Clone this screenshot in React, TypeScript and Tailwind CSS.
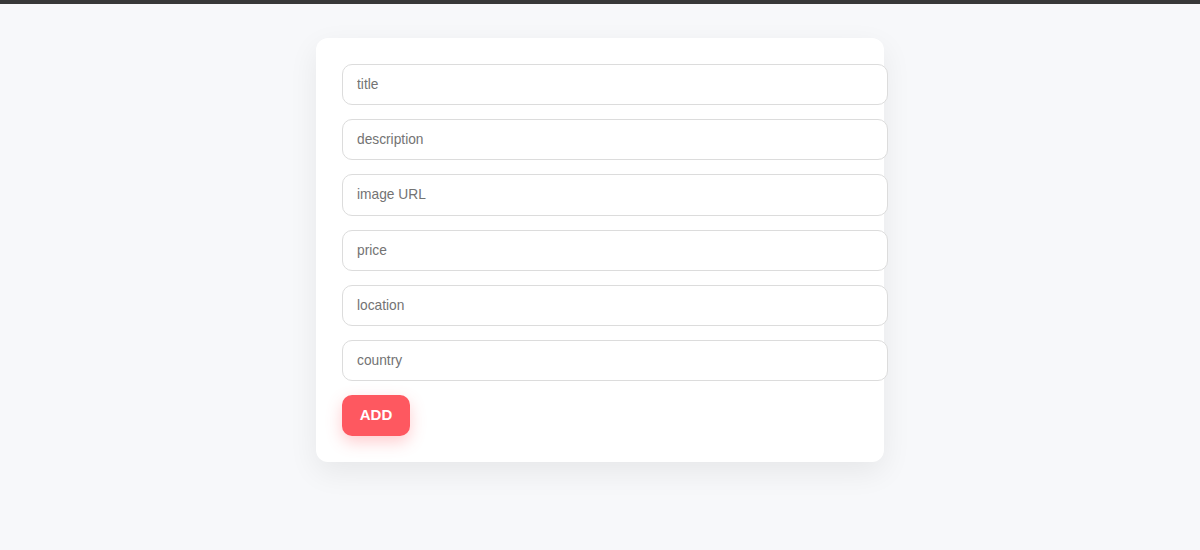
const FIELDS = ['title', 'description', 'image URL', 'price', 'location', 'country']

export default function App() {
  return (
    <div className="min-h-[550px] bg-[#f7f8fa] font-['Liberation_Sans',Arial,sans-serif]">
      <div className="h-1 bg-[#383838]" />
      <div className="flex justify-center pt-[34px]">
        <form className="w-[568px] rounded-xl bg-white p-[26px] shadow-[0_10px_30px_rgba(0,0,0,0.07)]">
          <div className="flex flex-col gap-[14px]">
            {FIELDS.map((f) => (
              <input
                key={f}
                type="text"
                placeholder={f}
                className="box-content h-[39.2px] w-full rounded-[10px] border border-[#dcdcdc] bg-white px-[14px] text-[13.75px] text-[#333] outline-none placeholder:text-[#737373]"
              />
            ))}
          </div>
          <button
            type="button"
            className="mt-[13.5px] h-[41px] w-[68px] rounded-[10px] bg-[#fe5860] text-[15px] font-bold text-white shadow-[0_6px_16px_rgba(254,88,96,0.3)]"
          >
            ADD
          </button>
        </form>
      </div>
    </div>
  )
}
